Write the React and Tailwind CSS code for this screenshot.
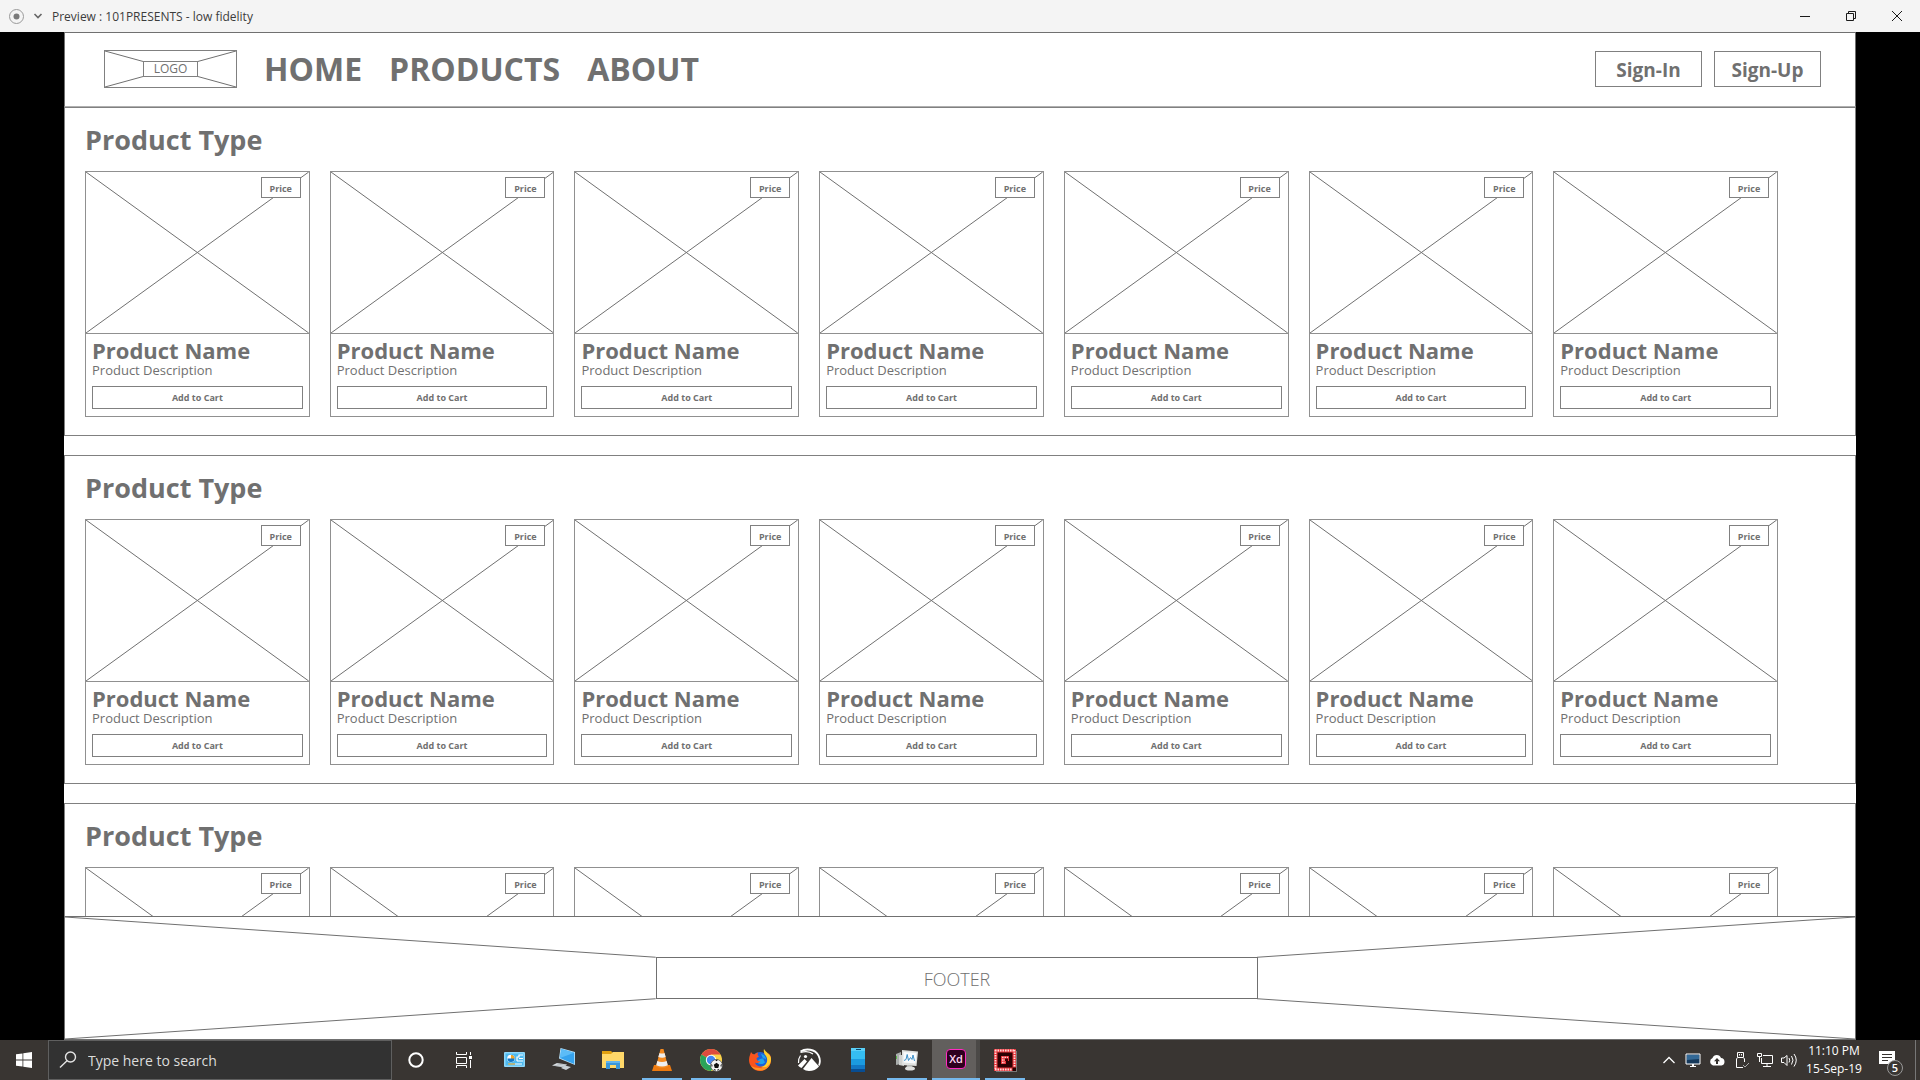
import React from "react";

const lineProps = {
  stroke: "#707070",
  strokeWidth: 1,
  vectorEffect: "non-scaling-stroke",
};

function Frame({ lines }) {
  return (
    <svg className="absolute inset-0 h-full w-full" viewBox="0 0 100 100" preserveAspectRatio="none" aria-hidden="true">
      {lines.map(([x1, y1, x2, y2], i) => (
        <line key={i} x1={x1} y1={y1} x2={x2} y2={y2} {...lineProps} />
      ))}
    </svg>
  );
}

function TitleBar() {
  return (
    <div className="flex h-8 shrink-0 items-center bg-[#f4f4f4] pt-0.5 pl-2 text-[#3c3c3c]">
      <svg className="h-4 w-4" viewBox="0 0 16 16" fill="none" aria-hidden="true">
        <circle cx="8.5" cy="7.5" r="7" stroke="#9a9a9a" />
        <circle cx="8.5" cy="7.5" r="3" fill="#7a7a7a" />
      </svg>
      <button className="ml-2 flex h-4 w-3 items-center justify-center" aria-label="Menu">
        <svg className="h-2 w-3" viewBox="0 0 12 8" fill="none" aria-hidden="true">
          <path d="M2.500 1 6 4.500 9.500 1" stroke="#666" strokeWidth="1.600" />
        </svg>
      </button>
      <h1 className="ml-2 text-[12px] leading-4">Preview : 101PRESENTS - low fidelity</h1>
      <div className="ml-auto flex">
        <button className="flex h-8 w-[46px] items-center justify-center" aria-label="Minimize">
          <svg className="h-3 w-3" viewBox="0 0 12 12" fill="none" stroke="#1a1a1a" aria-hidden="true">
            <path d="M1 5.500h10" />
          </svg>
        </button>
        <button className="flex h-8 w-[46px] items-center justify-center" aria-label="Restore">
          <svg className="h-3 w-3" viewBox="0 0 12 12" fill="none" stroke="#1a1a1a" aria-hidden="true">
            <path d="M1.500 2.500h7v7h-7zM3.500 2.500v-2h7v7h-2" />
          </svg>
        </button>
        <button className="flex h-8 w-[46px] items-center justify-center" aria-label="Close">
          <svg className="h-3 w-3" viewBox="0 0 12 12" fill="none" stroke="#1a1a1a" aria-hidden="true">
            <path d="m1 0 10 10M11 0 1 10" />
          </svg>
        </button>
      </div>
    </div>
  );
}

function SiteHeader() {
  return (
    <header className="flex h-[75px] shrink-0 items-center border border-[#707070] border-b-[#b0b0b0] pr-[34px] pb-0.5 pl-[39px]">
      <div className="relative flex h-[38px] w-[133px] items-center justify-center border border-[#808080]">
        <Frame lines={[[0, 0, 30, 30], [100, 0, 70, 30], [0, 100, 30, 70], [100, 100, 70, 70]]} />
        <span className="relative flex h-4 w-[55px] items-center justify-center border border-[#808080] bg-white text-[12px] leading-4">
          LOGO
        </span>
      </div>
      <nav className="ml-[27px] flex gap-[27px] text-[32px] leading-10 font-bold">
        <a href="#home">HOME</a>
        <a href="#products">PRODUCTS</a>
        <a href="#about">ABOUT</a>
      </nav>
      <div className="ml-auto flex gap-3 text-[19px] leading-6 font-bold">
        <button className="h-9 w-[107px] border border-[#808080] pt-0.5">Sign-In</button>
        <button className="h-9 w-[107px] border border-[#808080] pt-0.5">Sign-Up</button>
      </div>
    </header>
  );
}

function ProductCard() {
  return (
    <article className="h-[246px] border border-[#909090]">
      <div className="relative h-[162px] border-b border-[#909090]">
        <Frame lines={[[0, 0, 100, 100], [100, 0, 0, 100]]} />
        <span className="absolute top-[5px] right-2 flex h-[21px] w-10 items-center justify-center border border-[#808080] bg-white pt-0.5 text-[9px] leading-3 font-bold">
          Price
        </span>
      </div>
      <div className="px-1.5">
        <h3 className="mt-0.5 text-[22px] leading-7 font-bold whitespace-nowrap">Product Name</h3>
        <p className="-mt-0.5 text-[13px] leading-4 whitespace-nowrap">Product Description</p>
        <button className="mt-2 h-[23px] w-full border border-[#808080] text-[9px] leading-3 font-bold">Add to Cart</button>
      </div>
    </article>
  );
}

function ProductSection() {
  return (
    <section className="h-[329px] shrink-0 border border-[#808080] pr-[77px] pl-5">
      <h2 className="mt-3.5 text-[27px] leading-9 font-bold">Product Type</h2>
      <div className="mt-[13px] grid grid-cols-7 gap-5">
        {Array.from({ length: 7 }, (_, i) => (
          <ProductCard key={i} />
        ))}
      </div>
    </section>
  );
}

function SiteFooter() {
  return (
    <footer className="relative flex h-[124px] shrink-0 items-center justify-center border border-[#707070] bg-white">
      <Frame lines={[[0, 0, 33, 33], [100, 0, 66.6, 33], [0, 100, 33, 67], [100, 100, 66.6, 67]]} />
      <div className="relative mr-1.5 flex h-[34%] w-[33.6%] items-center justify-center border border-[#707070] pt-0.5 text-[18px] leading-6 font-light">
        FOOTER
      </div>
    </footer>
  );
}

const icons = {
  control: (
    <svg className="h-6 w-6" viewBox="0 0 24 24">
      <rect x="1" y="4" width="21" height="15" rx="1" fill="#8fd8fb" />
      <rect x="2.500" y="5.500" width="18" height="12" fill="#4db9f0" />
      <circle cx="8" cy="10.500" r="3.800" fill="#fff" />
      <path d="M8 10.500V7a3.500 3.500 0 1 1-3.500 3.500z" fill="#1377c7" />
      <path d="M8 10.500V7a3.500 3.500 0 0 1 3.500 3.500z" fill="#f6a623" />
      <path d="M14 13V9h2V7h4M14 13h6M16 10.500h4" stroke="#fff" strokeWidth="1.2" fill="none" />
      <path d="M5 16h7" stroke="#f6b23a" strokeWidth="1.2" />
      <path d="M12 16h7" stroke="#fff" strokeWidth="1" />
    </svg>
  ),
  computer: (
    <svg className="h-6 w-6" viewBox="0 0 24 24">
      <path d="m8.500 0 14.500 4v13L7 10.500z" fill="#b9e3fb" />
      <path d="m9.300 1 12.900 3.700v11.200L8 10z" fill="#36a3ee" />
      <path d="m9.300 1 12.900 3.700L8 10z" fill="#5cbcf7" />
      <path d="m0 17.500 5-2.500 10 1.500-3 3z" fill="#d9dee2" />
      <path d="m9 20 4-2.500 6 1.500-5 3z" fill="#c9d1d6" />
      <path d="m2.500 17.500 9 1M5 16l9 1.200" stroke="#8f999f" strokeWidth=".5" />
    </svg>
  ),
  folder: (
    <svg className="h-6 w-6" viewBox="0 0 24 24">
      <path d="M1 3h9l2 2v4H1z" fill="#e0a010" />
      <path d="M1 6h9l2-2h11v16H1z" fill="#ffd869" />
      <path d="M5 21v-8h14v8h-4v-4H9v4z" fill="#3a97da" />
      <path d="M5 13h14v2H5z" fill="#62b5ee" />
    </svg>
  ),
  vlc: (
    <svg className="h-6 w-6" viewBox="0 0 24 24">
      <path d="M4 17h16l2 6H2z" fill="#ed7a10" />
      <path d="M10.500 1h3L18 18.500q-6 3-12 0z" fill="#f58a1f" />
      <path d="m9.500 5-1.200 4q4 1.500 7.400 0L14.500 5q-2.500 1-5 0zM7.300 13l-1.100 4.300q6 2.500 11.600 0L16.700 13q-4.700 2-9.400 0z" fill="#eee" />
    </svg>
  ),
  chrome: (
    <svg className="h-6 w-6" viewBox="0 0 24 24">
      <circle cx="12" cy="12" r="11" fill="#fbd34b" />
      <path d="M12 12 2.500 6.500A11 11 0 0 1 21.500 6.500H12z" fill="#df4b3f" />
      <path d="M2.500 6.500A11 11 0 0 0 12 23l4.800-8.300L12 12z" fill="#2aa35a" />
      <circle cx="12" cy="12" r="5.200" fill="#fff" />
      <circle cx="12" cy="12" r="4.200" fill="#4285f4" />
      <circle cx="17.500" cy="17.500" r="6" fill="#f4f4f4" stroke="#333" strokeWidth=".6" />
      <path d="m17.500 14.800 2.700 2-1 3.100H15.800l-1-3.100zM16 11.800h3l-1.500 1.500zM12 16l1.500 1-.5 2.500zM23 16l-1.500 1 .5 2.500zM14.500 21.500l1.800-.5.2 2zM20.500 21.500l-1.800-.5-.2 2z" fill="#111" />
    </svg>
  ),
  firefox: (
    <svg className="h-6 w-6" viewBox="0 0 24 24">
      <circle cx="12" cy="12.500" r="8.500" fill="#1b62d8" />
      <path d="M13 6q5 1 5 5.500-2-2-4-1-4 .5-5 4 4 3 8 0" fill="#20a4ec" />
      <path d="M3 4q-2 5-2 8a11 11 0 0 0 22 0c0-4-1-6-3-7 1 3 .5 4 .5 6 0 6-4 7.500-7 7.500-4 0-6-2-6.500-4 2 1 4 .5 5.500-1-2 0-4-1-4-3 0-1 2-1 2.500-2-2-1.500-1.500-3-.5-4-2 0-3 1-4 2Q4 6 3 4z" fill="#f9541d" />
      <path d="M16 1q-1 4 2 7c3 5 0 10-5 11 5 2 10-1 10-8 0-5-5-6-7-10z" fill="#ffcf2e" />
      <path d="M3 18q5 6 13 4 5-2 6.500-7-4 6-11 5-5 0-8.500-2z" fill="#ff9420" />
    </svg>
  ),
  gallery: (
    <svg className="h-6 w-6" viewBox="0 0 24 24" fill="none">
      <path d="M3.500 3.500C9 0 18 1 21.500 7.500q2.500 5 .5 10" stroke="#fff" strokeWidth="1.800" />
      <path d="M3.500 4.500Q11 2 16 6" stroke="#fff" strokeWidth="1.200" />
      <path d="M3.500 7.500Q1 11 1.500 15" stroke="#fff" strokeWidth="1.200" />
      <circle cx="8.500" cy="8.500" r="1.600" fill="#fff" />
      <path d="M1 17.500 7.500 11l2.500 2.500-5.500 6.500q-2-1-3.500-2.500z" fill="#fff" />
      <path d="m6 21 8.500-11 7.500 8.500q-4 4.500-10 4.500-3.500 0-6-2z" fill="#fff" />
    </svg>
  ),
  phone: (
    <svg className="h-6 w-6" viewBox="0 0 24 24">
      <path d="M5 0h14v24H5z" fill="#35bef2" />
      <path d="M5 0h14v3H5z" fill="#5ad0f8" />
      <path d="M5 11h14v6H5z" fill="#1b9be0" />
      <path d="M5 17h14v4H5z" fill="#1277c4" />
      <path d="M5 21h14v3H5z" fill="#084d92" />
      <path d="M10 1.500h5" stroke="#0b4a70" />
    </svg>
  ),
  monitor: (
    <svg className="h-6 w-6" viewBox="0 0 24 24">
      <path d="M1 6 6 4v12l-5 1z" fill="#a9adac" />
      <path d="M4 7h5v11l-5-1z" fill="#d0d2d0" />
      <path d="m7 2 16 1.500L21.500 18 7 17z" fill="#dfe1df" />
      <path d="m8.500 4 13 1-1.200 10.500L8.500 14.500z" fill="#f8fbfd" />
      <path d="m9 12.500 2-1 1.200-5 1.300 6 2-3 1.500 2L18 7l1.500 6" stroke="#3c8fc7" fill="none" />
      <path d="M12 17h5l1 4h-7z" fill="#b5b7b5" />
      <ellipse cx="15" cy="20.500" rx="5" ry="2" fill="#dedfdd" />
      <path d="M1.500 8v3" stroke="#58b947" />
    </svg>
  ),
  red: (
    <svg className="h-6 w-6" viewBox="0 0 24 24" fill="none">
      <path d="M3 3h21v21H3z" fill="#777" />
      <path d="M1 1h22v22H1z" fill="#e8343a" />
      <path d="M2 2.500h20M2 21.500h17M2.500 2v20M21.500 2v17" stroke="#ffd9d9" strokeWidth="1.800" strokeDasharray="1.600 .9" />
      <path d="M4.500 4.500h15v15h-15z" fill="#2b0003" />
      <path d="M8 8h8v5h-3v3H8z" fill="#e8343a" />
      <path d="M9 9.500h6M9 12h6M9 14.500h3" stroke="#ffd0d0" strokeWidth="1.600" strokeDasharray="1.600 .9" />
      <path d="M12 10.500h3V13h-3z" fill="#400006" />
      <path d="M19.500 19.500H23V23h-3.500z" fill="#250000" />
    </svg>
  ),
};

const apps = [
  ["Control Panel", "control", false],
  ["This PC", "computer", false],
  ["File Explorer", "folder", false],
  ["VLC", "vlc", true],
  ["Chrome", "chrome", true],
  ["Firefox", "firefox", false],
  ["Gallery", "gallery", false],
  ["Your Phone", "phone", false],
  ["System Monitor", "monitor", true],
  ["Adobe XD", "xd", true],
  ["Pixel Recorder", "red", true],
];

function AppButton({ label, icon, running }) {
  const active = icon === "xd";
  return (
    <button
      aria-label={label}
      className={
        active
          ? "relative flex h-10 w-12 items-center justify-center border-r-4 border-[#4b4947] bg-[#625f5d] pb-0.5 pl-1"
          : "relative flex h-10 w-12 items-center justify-center"
      }
    >
      {active ? (
        <span className="flex h-5 w-5 items-center justify-center rounded-sm border border-[#ff2bc2] bg-[#2e001e] text-[11px] leading-4 font-semibold text-[#ffd9f2]">
          Xd
        </span>
      ) : (
        icons[icon]
      )}
      {running && (
        <span className={active ? "absolute -right-1 bottom-0 left-0 h-0.5 bg-[#76b9ed]" : "absolute right-1 bottom-0 left-1 h-0.5 bg-[#76b9ed]"} />
      )}
    </button>
  );
}

function Tray() {
  return (
    <div className="ml-auto flex h-10 items-center text-white">
      <button className="flex h-10 w-6 items-center justify-center" aria-label="Show hidden icons">
        <svg className="h-4 w-4" viewBox="0 0 16 16" fill="none" stroke="#fff" strokeWidth="1.300"><path d="m2.500 11 5.500-5.500 5.500 5.500" /></svg>
      </button>
      <button className="flex h-10 w-6 items-center justify-center" aria-label="Display">
        <svg className="h-4 w-4" viewBox="0 0 16 16"><path d="M1 2h14v10H1z" fill="#16395b" stroke="#fff" /><path d="M2 3h12v4L2 8z" fill="#336997" /><path d="M7 12h2v2H7zM5 14h6v1H5z" fill="#fff" /></svg>
      </button>
      <button className="flex h-10 w-6 items-center justify-center" aria-label="Cloud backup">
        <svg className="h-4 w-4" viewBox="0 0 16 16"><path d="M4 13.500a4 4 0 0 1-.5-7.500A4.500 4.500 0 0 1 12 6a3.800 3.800 0 0 1 .5 7.500z" fill="#fff" /><path d="m8 6 3 3.300H9V12H7V9.300H5z" fill="#35312e" /></svg>
      </button>
      <button className="flex h-10 w-6 items-center justify-center" aria-label="USB device">
        <svg className="h-4 w-4" viewBox="0 0 16 16" fill="none" stroke="#fff"><path d="M4.500 5V.500h6V5M10 15.500H3.500V7L4.500 5.500h6L11.500 7v3M6.500 2v1.500M8.500 2v1.500" /><path d="m10 13 2 2 4-4" stroke="#aaa" /></svg>
      </button>
      <button className="flex h-10 w-6 items-center justify-center" aria-label="Network">
        <svg className="h-4 w-4" viewBox="0 0 16 16" fill="none" stroke="#fff"><path d="M6 3.500h9.500v8H4.500V6M10 11.500v3M6 14.500h8M.5 1.500h4v3h-4zM2.500 5v5" /></svg>
      </button>
      <button className="flex h-10 w-6 items-center justify-center" aria-label="Volume">
        <svg className="h-4 w-4" viewBox="0 0 16 16" fill="none" stroke="#fff"><path d="M.5 6v4.500H3l3 3v-10L3 6zM8 6q1.500 2.200 0 4.500M10.500 4q3 4 0 8.500M13 2q4.500 6 0 12.500" /></svg>
      </button>
      <div className="w-[66px] text-center text-[12px] leading-[18px] whitespace-nowrap">
        <div>11:10 PM</div>
        <div>15-Sep-19</div>
      </div>
      <button className="relative flex h-10 w-11 items-center justify-center pr-1 pb-0.5" aria-label="5 notifications">
        <svg className="h-4 w-4" viewBox="0 0 16 16"><path d="M0 0h16v13h-4v3l-3-3H0z" fill="#fff" /><path d="M3 3.500h10M3 6.500h10M3 9.500h6" stroke="#35312e" /></svg>
        <span className="absolute right-2 bottom-1 flex h-4 w-4 items-center justify-center rounded-full border border-[#999] bg-[#393633] text-[11px] leading-4 font-semibold">5</span>
      </button>
      <div className="mr-1 ml-1 h-10 w-px bg-[#777]" />
    </div>
  );
}

function Taskbar() {
  return (
    <div className="flex h-10 shrink-0 items-center bg-[#393532]">
      <button className="flex h-10 w-12 items-center justify-center" aria-label="Start">
        <svg className="h-4 w-4" viewBox="0 0 16 16" fill="#fff"><path d="m0 2.300 6.500-.9v6.200H0zM7.300 1.300 16 0v7.600H7.300zM0 8.400h6.500v6.200L0 13.700zM7.300 8.400H16V16l-8.700-1.200z" /></svg>
      </button>
      <label className="flex h-10 w-[344px] items-center border border-[#5f5f5f] bg-[#323232] pl-2.5">
        <svg className="h-[18px] w-[18px]" viewBox="0 0 18 18" fill="none" stroke="#e4e4e4" strokeWidth="1.400"><circle cx="11.500" cy="6" r="5" /><path d="M8 9.800 1 16.500" /></svg>
        <input
          type="text"
          aria-label="Search"
          placeholder="Type here to search"
          className="ml-[11px] w-0 flex-1 bg-transparent pt-0.5 text-[14px] leading-5 outline-none placeholder:text-[#dcdcdc]"
        />
      </label>
      <button className="flex h-10 w-12 items-center justify-center" aria-label="Cortana">
        <svg className="h-4 w-4" viewBox="0 0 16 16" fill="none" stroke="#fff" strokeWidth="2"><circle cx="8" cy="8" r="6.700" /></svg>
      </button>
      <button className="flex h-10 w-12 items-center justify-center" aria-label="Task view">
        <svg className="h-4 w-4" viewBox="0 0 16 16" fill="none" stroke="#fff"><path d="M.5 0v2.500h10V0M.5 16v-2.500h10V16M.5 5.500h10v6H.5zM14.500 0v3M14.500 8v8" /><path d="M13 4h3v3h-3z" fill="#fff" stroke="none" /></svg>
      </button>
      <div className="ml-[3px] flex gap-px">
        {apps.map(([label, icon, running]) => (
          <AppButton key={label} label={label} icon={icon} running={running} />
        ))}
      </div>
      <Tray />
    </div>
  );
}

export default function App() {
  return (
    <div className="flex h-screen flex-col overflow-hidden bg-black font-['Open_Sans','Noto_Sans',sans-serif] text-[#707070]">
      <TitleBar />
      <div className="mx-16 flex min-h-0 flex-1 flex-col bg-white">
        <SiteHeader />
        <main className="flex min-h-0 flex-1 flex-col gap-[19px] overflow-hidden">
          <ProductSection />
          <ProductSection />
          <ProductSection />
        </main>
        <SiteFooter />
      </div>
      <Taskbar />
    </div>
  );
}
